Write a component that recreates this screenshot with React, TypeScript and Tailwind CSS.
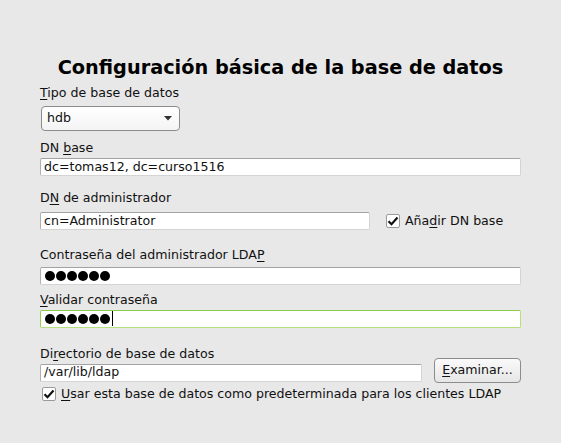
import React from 'react';

const U: React.FC<{ children: React.ReactNode }> = ({ children }) => (
  <span className="underline underline-offset-[2px] decoration-1">{children}</span>
);

const Check: React.FC = () => (
  <span className="inline-flex w-[14px] h-[14px] bg-white border border-[#9a9a9a] rounded-[2px] items-center justify-center shrink-0">
    <svg width="12" height="12" viewBox="0 0 12 12">
      <path d="M1.5 6.2 L4.5 9.2 L10.5 2.5" fill="none" stroke="#111" strokeWidth="2.2" />
    </svg>
  </span>
);

const Field: React.FC<{ children?: React.ReactNode; className?: string; focus?: boolean }> = ({ children, className = '', focus }) => (
  <div
    className={`h-[18px] bg-white rounded-[2px] flex items-center pl-[3px] ${
      focus
        ? 'border border-[#b4e07e] border-t-[#8ccb4c] border-l-[#96d05a]'
        : 'border border-[#d4d4d4] border-t-[#a2a2a2] border-l-[#b0b0b0]'
    } ${className}`}
  >
    {children}
  </div>
);

const Dots: React.FC<{ cursor?: boolean }> = ({ cursor }) => (
  <div className="flex items-center gap-[1px] pl-[1px]">
    {[0, 1, 2, 3, 4, 5].map(i => (
      <span key={i} className="w-[10px] h-[10px] rounded-full bg-black" />
    ))}
    {cursor && <span className="w-[1px] h-[15px] bg-black ml-[1px]" />}
  </div>
);

const Label: React.FC<{ children: React.ReactNode; className?: string }> = ({ children, className = '' }) => (
  <div className={`h-[15px] leading-[15px] ${className}`}>{children}</div>
);

export default function App() {
  return (
    <div
      className="w-[561px] h-[443px] bg-[#e8e8e8] text-[#111] text-[12.6px] px-[40px] overflow-hidden"
      style={{ fontFamily: '"DejaVu Sans", sans-serif' }}
    >
      <h1 className="pt-[56px] h-[80px] text-[19.3px] leading-[24px] font-bold text-center text-black">
        Configuración básica de la base de datos
      </h1>

      <Label className="mt-[5px]"><U>T</U>ipo de base de datos</Label>
      <div className="mt-[6px] ml-[1px] w-[139px] h-[25px] rounded-[4px] border border-[#8c8c8c] bg-gradient-to-b from-white to-[#f4f4f4] flex items-center justify-between pl-[5px] pr-[7px]">
        <span>hdb</span>
        <svg width="8" height="5" viewBox="0 0 8 5">
          <path d="M0 0 H8 L4 4.5 Z" fill="#333" />
        </svg>
      </div>

      <Label className="mt-[9px]">DN <U>b</U>ase</Label>
      <Field className="mt-[3px]">dc=tomas12, dc=curso1516</Field>

      <Label className="mt-[14px]">D<U>N</U> de administrador</Label>
      <div className="mt-[7px] flex items-center">
        <Field className="w-[330px]">cn=Administrator</Field>
        <div className="ml-[16px] flex items-center gap-[5px]">
          <Check />
          <span>Aña<U>d</U>ir DN base</span>
        </div>
      </div>

      <Label className="mt-[16px]">Contraseña del administrador LDA<U>P</U></Label>
      <Field className="mt-[5px]"><Dots /></Field>

      <Label className="mt-[7px]"><U>V</U>alidar contraseña</Label>
      <Field className="mt-[3px]" focus><Dots cursor /></Field>

      <Label className="mt-[18px]">Di<U>r</U>ectorio de base de datos</Label>
      <div className="flex items-end">
        <Field className="w-[382px] mb-[1px]">/var/lib/ldap</Field>
        <button className="ml-[12px] w-[87px] h-[25px] rounded-[4px] border border-[#8c8c8c] bg-gradient-to-b from-[#fafafa] to-[#e6e6e6] text-[12.6px] text-[#111] mt-[-3px]">
          <U>E</U>xaminar...
        </button>
      </div>

      <div className="mt-[4px] ml-[2px] flex items-center gap-[5px] h-[15px]">
        <Check />
        <span><U>U</U>sar esta base de datos como predeterminada para los clientes LDAP</span>
      </div>
    </div>
  );
}
